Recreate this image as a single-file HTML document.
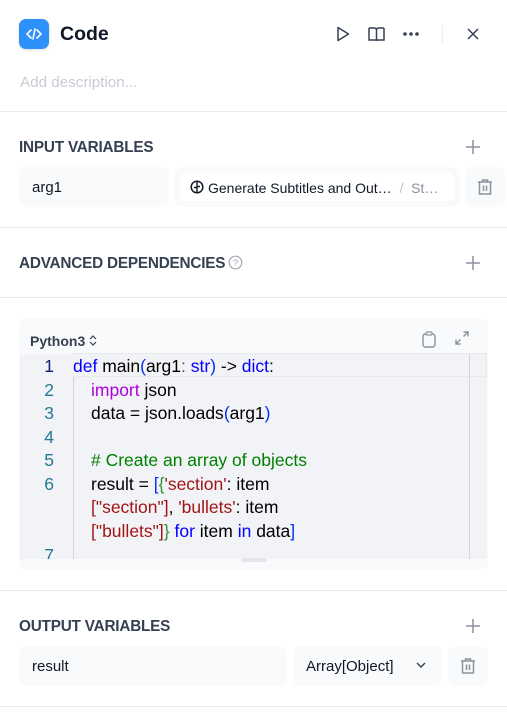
<!DOCTYPE html>
<html><head><meta charset="utf-8"><style>
*{margin:0;padding:0;box-sizing:border-box}
body{width:507px;height:712px;background:#fff;font-family:"Liberation Sans",sans-serif;position:relative;overflow:hidden;color:#101828}
.a{position:absolute}
.hr{position:absolute;left:0;width:507px;height:1px;background:#eaecf0}
.h{position:absolute;left:19px;font-size:15.3px;font-weight:bold;color:#354052;letter-spacing:-0.2px}
.plus{position:absolute;left:466px;width:14px;height:14px}
.box{position:absolute;background:#f9fafb;border-radius:8px}
.code{position:absolute;left:73px;font-size:17.5px;white-space:pre;color:#000;letter-spacing:0}
.ln{position:absolute;left:30px;width:24px;text-align:right;font-size:17.5px;color:#237893}
.k{color:#0000ff}.p{color:#0431fa}.s{color:#a31515}.c{color:#008000}.g{color:#319331}
</style></head><body>
<div class="a" style="left:19px;top:19px;width:30px;height:30px;background:#2e90fa;border-radius:7px;box-shadow:0 1px 3px rgba(0,0,0,.15)">
<svg width="30" height="30" viewBox="0 0 30 30"><path d="M12 11l-4 4 4 4M18 11l4 4-4 4M16 10l-2 10" stroke="#fff" stroke-width="1.6" fill="none" stroke-linecap="round" stroke-linejoin="round"/></svg></div>
<div class="a" style="left:60px;top:23px;font-size:19.5px;font-weight:bold;color:#101828">Code</div>
<svg class="a" style="left:334px;top:25px" width="18" height="18" viewBox="0 0 18 18"><path d="M4 2.5v13l10.5-6.5z" stroke="#354052" stroke-width="1.5" fill="none" stroke-linejoin="round"/></svg>
<svg class="a" style="left:367px;top:25px" width="19" height="18" viewBox="0 0 19 18"><path d="M2 3h5.5a2 2 0 0 1 2 2v11M17 3h-5.5a2 2 0 0 0-2 2M2 3v12h7.5M17 3v12h-7.5" stroke="#354052" stroke-width="1.5" fill="none"/></svg>
<svg class="a" style="left:402px;top:30px" width="18" height="8"><circle cx="3" cy="4" r="1.8" fill="#354052"/><circle cx="9" cy="4" r="1.8" fill="#354052"/><circle cx="15" cy="4" r="1.8" fill="#354052"/></svg>
<div class="a" style="left:442px;top:25px;width:1px;height:18px;background:#eaecf0"></div>
<svg class="a" style="left:466px;top:27px" width="14" height="14"><path d="M2 2l10 10M12 2L2 12" stroke="#354052" stroke-width="1.5"/></svg>
<div class="a" style="left:20px;top:74px;font-size:15.2px;color:#c8ccd3">Add description...</div>
<div class="hr" style="top:111px"></div>
<div class="h" style="top:139px">INPUT VARIABLES</div>
<svg class="plus" style="top:140px"><path d="M7 0v14M0 7h14" stroke="#8a919e" stroke-width="1.5"/></svg>
<div class="box" style="left:19px;top:167px;width:150px;height:40px"></div>
<div class="a" style="left:32px;top:179px;font-size:15px">arg1</div>
<div class="box" style="left:174px;top:167px;width:286px;height:40px"></div>
<div class="a" style="left:180px;top:173px;width:274px;height:28px;background:#fff;border-radius:6px"></div>
<svg class="a" style="left:190px;top:180px" width="14" height="14"><circle cx="7" cy="7" r="5.8" stroke="#101828" stroke-width="1.5" fill="none"/><path d="M7 2v10M7 6.5h3M4 7.5h3" stroke="#101828" stroke-width="1.4"/></svg>
<div class="a" style="left:208px;top:180px;font-size:14px;color:#101828;white-space:nowrap">Generate Subtitles and Out… <span style="color:#c0c4cc">&nbsp;/&nbsp;</span> <span style="color:#8a919e">St…</span></div>
<div class="box" style="left:465px;top:167px;width:40px;height:40px"></div>
<svg class="a" style="left:476px;top:178px" width="18" height="18" viewBox="0 0 18 18"><path d="M2 4h14M6.5 4V2h5v2M3.5 4v12h11V4M7.5 7.5v5.5M10.5 7.5v5.5" stroke="#8a919e" stroke-width="1.5" fill="none"/></svg>
<div class="hr" style="top:227px"></div>
<div class="h" style="top:255px">ADVANCED DEPENDENCIES</div>
<svg class="a" style="left:228px;top:255px" width="15" height="15"><circle cx="7.5" cy="7.5" r="6.3" stroke="#a0a6b1" stroke-width="1.2" fill="none"/><text x="7.5" y="11" font-size="9.5" text-anchor="middle" fill="#a0a6b1" font-family="Liberation Sans">?</text></svg>
<svg class="plus" style="top:256px"><path d="M7 0v14M0 7h14" stroke="#8a919e" stroke-width="1.5"/></svg>
<div class="hr" style="top:297px"></div>
<div class="a" style="left:19px;top:318px;width:469px;height:252px;background:#f9fafb;border-radius:8px"></div>
<div class="a" style="left:20px;top:354px;width:467px;height:205px;background:#f2f3f7"></div>
<div class="a" style="left:73px;top:353px;width:414px;height:24px;border:1px solid #e8e9ee;border-left:none"></div>
<div class="a" style="left:73px;top:377px;width:1px;height:182px;background:#d4d6dc"></div>
<div class="a" style="left:469px;top:354px;width:1px;height:205px;background:#d4d6dc"></div>
<div class="a" style="left:30px;top:333px;font-size:14px;font-weight:bold;color:#354052">Python3</div>
<svg class="a" style="left:88px;top:334px" width="10" height="13"><path d="M2 5l3-3 3 3M2 8l3 3 3-3" stroke="#354052" stroke-width="1.2" fill="none"/></svg>
<svg class="a" style="left:421px;top:331px" width="16" height="17"><rect x="2" y="3" width="12" height="13" rx="2.5" stroke="#8a919e" stroke-width="1.4" fill="none"/><rect x="5" y="1" width="6" height="3" rx="1" stroke="#8a919e" stroke-width="1.2" fill="#f9fafb"/></svg>
<svg class="a" style="left:454px;top:330px" width="16" height="16"><path d="M9.5 2h4.5v4.5M14 2l-4.5 4.5M6.5 14H2V9.5M2 14l4.5-4.5" stroke="#8a919e" stroke-width="1.4" fill="none"/></svg>
<div class="ln" style="top:356px;color:#0b216f">1</div>
<div class="ln" style="top:380px">2</div>
<div class="ln" style="top:403px">3</div>
<div class="ln" style="top:427px">4</div>
<div class="ln" style="top:450px">5</div>
<div class="ln" style="top:474px">6</div>
<div class="ln" style="top:545px">7</div>
<div class="code" style="top:356px"><span class="k">def</span> main<span class="p">(</span>arg1<span style="color:#555">:</span> <span class="k">str</span><span class="p">)</span> -&gt; <span class="k">dict</span>:</div>
<div class="code" style="top:380px;left:91px"><span style="color:#af00db">import</span> json</div>
<div class="code" style="top:403px;left:91px">data = json.loads<span class="p">(</span>arg1<span class="p">)</span></div>
<div class="code" style="top:450px;left:91px"><span class="c"># Create an array of objects</span></div>
<div class="code" style="top:474px;left:91px">result = <span class="p">[</span><span class="g">{</span><span class="s">'section'</span>: item</div>
<div class="code" style="top:497px;left:91px"><span class="s">["section"]</span>, <span class="s">'bullets'</span>: item</div>
<div class="code" style="top:521px;left:91px"><span class="s">["bullets"]</span><span class="g">}</span> <span class="k">for</span> item <span class="k">in</span> data<span class="p">]</span></div>
<div class="a" style="left:20px;top:559px;width:467px;height:11px;background:#f9fafb;border-radius:0 0 8px 8px"></div>
<div class="a" style="left:241px;top:558px;width:26px;height:4px;background:#e4e6ea;border-radius:2px"></div>
<div class="hr" style="top:590px"></div>
<div class="h" style="top:618px">OUTPUT VARIABLES</div>
<svg class="plus" style="top:619px"><path d="M7 0v14M0 7h14" stroke="#8a919e" stroke-width="1.5"/></svg>
<div class="box" style="left:19px;top:646px;width:268px;height:40px"></div>
<div class="a" style="left:32px;top:658px;font-size:15px">result</div>
<div class="box" style="left:293px;top:646px;width:149px;height:40px"></div>
<div class="a" style="left:306px;top:658px;font-size:15px">Array[Object]</div>
<svg class="a" style="left:415px;top:661px" width="12" height="8"><path d="M2 2l4 4 4-4" stroke="#354052" stroke-width="1.4" fill="none"/></svg>
<div class="box" style="left:448px;top:646px;width:40px;height:40px"></div>
<svg class="a" style="left:459px;top:657px" width="18" height="18" viewBox="0 0 18 18"><path d="M2 4h14M6.5 4V2h5v2M3.5 4v12h11V4M7.5 7.5v5.5M10.5 7.5v5.5" stroke="#8a919e" stroke-width="1.5" fill="none"/></svg>
<div class="hr" style="top:706px"></div>
</body></html>
